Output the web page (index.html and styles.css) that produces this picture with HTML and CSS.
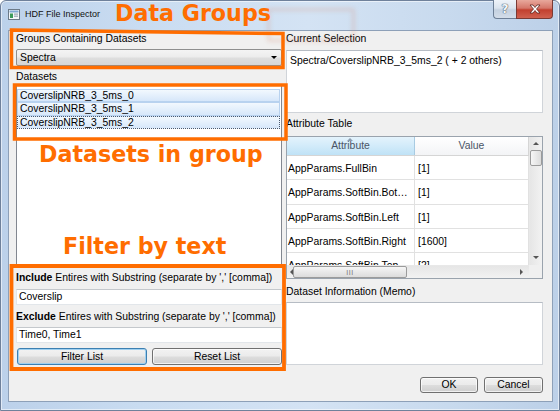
FILE: index.html
```html
<!DOCTYPE html>
<html>
<head>
<meta charset="utf-8">
<title>HDF File Inspector</title>
<link rel="stylesheet" href="styles.css">
</head>
<body>
<div class="window">
  <div class="titlebar">
    <div class="ghost"></div>
    <svg class="appicon" width="12" height="11" viewBox="0 0 12 11">
      <rect x="0.5" y="0.5" width="11" height="10" fill="#f4f6f8" stroke="#6c7a88"/>
      <rect x="1.5" y="1.5" width="9" height="2" fill="#7fa7d2"/>
      <rect x="2" y="4.5" width="3" height="4.5" fill="#3d9a5a"/>
      <rect x="6" y="4.5" width="4" height="1.2" fill="#9aa6b2"/>
      <rect x="6" y="6.6" width="4" height="1.2" fill="#9aa6b2"/>
    </svg>
    <span class="title">HDF File Inspector</span>
    <div class="caption">
      <div class="cbtn help"><span>?</span></div>
      <div class="cbtn close">
        <svg width="14" height="10" viewBox="0 0 14 10">
          <path d="M2 1 L5 1 L7 3.5 L9 1 L12 1 L8.5 5 L12 9 L9 9 L7 6.5 L5 9 L2 9 L5.5 5 Z" fill="#fff" stroke="#5a2622" stroke-width="0.8" stroke-linejoin="round"/>
        </svg>
      </div>
    </div>
  </div>

  <div class="client">
    <div class="leftcol">
      <div class="lbl">Groups Containing Datasets</div>
      <div class="combo"><span>Spectra</span><span class="drop"></span></div>
      <div class="lbl gap5">Datasets</div>
      <div class="listbox">
        <div class="item">CoverslipNRB_3_5ms_0</div>
        <div class="item">CoverslipNRB_3_5ms_1</div>
        <div class="item focus">CoverslipNRB_3_5ms_2</div>
      </div>
      <div class="lbl gap6"><b>Include</b> Entires with Substring (separate by ',' [comma])</div>
      <div class="textbox gap5">Coverslip</div>
      <div class="lbl gap6"><b>Exclude</b> Entires with Substring (separate by ',' [comma])</div>
      <div class="textbox gap4">Time0, Time1</div>
      <div class="btnrow">
        <div class="btn default">Filter List</div>
        <div class="btn">Reset List</div>
      </div>
    </div>

    <div class="rightcol">
      <div class="lbl">Current Selection</div>
      <div class="textarea sel">Spectra/CoverslipNRB_3_5ms_2 ( + 2 others)</div>
      <div class="lbl gap5">Attribute Table</div>
      <div class="table">
        <div class="tview">
          <div class="thead">
            <div class="th c1 sorted"><span class="sortarrow"></span>Attribute</div>
            <div class="th c2">Value</div>
          </div>
          <div class="tbody">
            <div class="tr"><div class="td c1">AppParams.FullBin</div><div class="td c2">[1]</div></div>
            <div class="tr"><div class="td c1">AppParams.SoftBin.Bot…</div><div class="td c2">[1]</div></div>
            <div class="tr"><div class="td c1">AppParams.SoftBin.Left</div><div class="td c2">[1]</div></div>
            <div class="tr"><div class="td c1">AppParams.SoftBin.Right</div><div class="td c2">[1600]</div></div>
            <div class="tr"><div class="td c1">AppParams.SoftBin.Top</div><div class="td c2">[2]</div></div>
          </div>
        </div>
        <div class="vscroll">
          <span class="arr up"></span>
          <div class="vthumb"></div>
          <span class="arr down"></span>
        </div>
        <div class="hscroll">
          <span class="arr left"></span>
          <div class="hthumb"><span class="grip">III</span></div>
          <span class="arr right"></span>
        </div>
        <div class="corner"></div>
      </div>
      <div class="lbl gap7">Dataset Information (Memo)</div>
      <div class="textarea memo"></div>
      <div class="dlgbtns">
        <div class="btn ok">OK</div>
        <div class="btn cancel">Cancel</div>
      </div>
    </div>
  </div>

  <svg class="marks" width="560" height="411" viewBox="0 0 560 411">
    <polygon points="11.5,30 283,33.5 283,67.5 11.5,67.5" fill="none" stroke="#ff6d00" stroke-width="3.5"/>
    <polygon points="14.5,85 286,85 286,139 14.5,139" fill="none" stroke="#ff6d00" stroke-width="3.5"/>
    <polygon points="11.5,266 284,266 284,369 11.5,369" fill="none" stroke="#ff6d00" stroke-width="3.8"/>
  </svg>
  <div class="anno a1">Data Groups</div>
  <div class="anno a2">Datasets in group</div>
  <div class="anno a3">Filter by text</div>
</div>
</body>
</html>
```

FILE: styles.css
```css
* { box-sizing: border-box; margin: 0; padding: 0; }
html, body { width: 560px; height: 411px; overflow: hidden; background: #fff; }
body { font-family: "Liberation Sans", Arial, sans-serif; font-size: 10.4px; color: #000; }

.window {
  position: relative;
  width: 560px;
  height: 411px;
  display: flex;
  flex-direction: column;
  border: 1px solid #6f819b;
  border-radius: 6px 6px 0 0;
  background: linear-gradient(90deg, #bcd1ea 0%, #c9dcf1 25%, #d4e3f4 55%, #c8daee 80%, #bcd0e8 100%);
  box-shadow: inset 0 0 0 1px rgba(255,255,255,0.55);
}

/* title bar */
.titlebar {
  position: relative;
  height: 29px;
  flex: none;
  display: flex;
  align-items: flex-start;
  padding: 0 6px 0 7px;
}
.ghost {
  position: absolute;
  left: 266px;
  top: 7px;
  width: 88px;
  height: 34px;
  border: 3px solid rgba(214, 150, 125, 0.3);
  border-radius: 3px;
  filter: blur(2px);
}
.appicon { margin-top: 8px; flex: none; }
.title {
  position: relative;
  margin-left: 5px;
  margin-top: 7px;
  font-size: 9px;
  line-height: 12px;
  color: #111;
}
.caption { margin-left: auto; margin-top: -1px; display: flex; }
.cbtn {
  height: 19px;
  display: flex;
  align-items: center;
  justify-content: center;
  border: 1px solid #6d7f96;
  border-top: none;
}
.help {
  width: 23px;
  border-right: none;
  border-radius: 0 0 0 4px;
  background: linear-gradient(#eef3f9 0%, #dbe4ee 45%, #c4d1e0 55%, #d3dde9 100%);
}
.help span {
  font: bold 12px "DejaVu Sans", sans-serif;
  color: #f4f7fa;
  text-shadow: 0 0 1px #55606e, 0 0 1px #55606e, 0 0 1px #55606e;
  line-height: 12px;
}
.close {
  width: 37px;
  border-radius: 0 0 4px 0;
  border-color: #7a3a34;
  background: linear-gradient(#e8a89c 0%, #d5776a 45%, #c2402f 55%, #d0614f 100%);
}

/* client area */
.client {
  flex: 1;
  margin: 0 6px 8px 7px;
  border: 1px solid #8da0b8;
  background: #f0f0f0;
  display: flex;
  gap: 4px;
  padding: 2px 8px 0 7px;
}
.leftcol { width: 266px; display: flex; flex-direction: column; }
.rightcol { width: 257px; display: flex; flex-direction: column; }

.lbl { height: 12px; line-height: 12px; white-space: nowrap; }
.lbl b { font-weight: bold; }
.gap4 { margin-top: 4px; }
.gap5 { margin-top: 5px; }
.gap6 { margin-top: 6px; }
.gap7 { margin-top: 7px; }

.combo {
  margin-top: 4px;
  height: 17px;
  border: 1px solid #8e8f8f;
  border-radius: 2px;
  background: linear-gradient(#f4f4f4 0%, #ececec 48%, #dedede 52%, #d6d6d6 100%);
  display: flex;
  align-items: center;
  padding: 0 4px 0 3px;
}
.combo span:first-child { flex: 1; }
.drop {
  width: 0; height: 0;
  border-left: 3px solid transparent;
  border-right: 3px solid transparent;
  border-top: 3px solid #000;
}

.listbox {
  margin-top: 1px;
  height: 182px;
  background: #fff;
  border: 1px solid #828790;
  padding: 4px 1px 0 0;
}
.item {
  height: 13.3px;
  line-height: 11px;
  padding-left: 2px;
  border: 1px solid #b8d2ef;
  background: linear-gradient(#f2f8fe, #d6e7fa);
  white-space: nowrap;
}
.item.focus { border: 1px dotted #4a5a70; }

.textbox {
  height: 16px;
  line-height: 14px;
  background: #fff;
  border: 1px solid #e2e6ea;
  border-top-color: #c4c8cc;
  padding-left: 2px;
}
.btnrow {
  margin-top: 5px;
  display: flex;
  gap: 5px;
  padding-left: 1px;
}
.btn {
  height: 17px;
  line-height: 15px;
  text-align: center;
  border: 1px solid #707070;
  border-radius: 3px;
  background: linear-gradient(#f2f2f2 0%, #ebebeb 48%, #dddddd 52%, #cfcfcf 100%);
  box-shadow: inset 0 0 0 1px rgba(255,255,255,0.7);
}
.btnrow .btn { width: 130px; }
.btn.default { border-color: #3c7fb1; box-shadow: inset 0 0 0 1px #9fd0f0; }

.textarea {
  background: #fff;
  border: 1px solid #d0d4d9;
  border-top-color: #b6bcc4;
}
.sel { margin-top: 5px; height: 63px; padding: 4px 3px; line-height: 12px; }
.memo { margin-top: 4px; height: 63px; }

.table {
  margin-top: 6px;
  height: 143px;
  border: 1px solid #9aa3ad;
  background: #fff;
  display: grid;
  grid-template-columns: 1fr 13px;
  grid-template-rows: 1fr 13px;
}
.tview { overflow: hidden; }
.thead { display: flex; height: 19px; border-bottom: 1px solid #d5d5d5; }
.th {
  position: relative;
  line-height: 18px;
  text-align: center;
  color: #4a5566;
  border-right: 1px solid #d5d5d5;
  background: linear-gradient(#ffffff, #f3f4f6);
}
.th.sorted {
  background: linear-gradient(#e4f3fc 0%, #d2ebfa 50%, #bfe2f6 100%);
  border-right-color: #a8cbe2;
}
.c1 { width: 128px; flex: none; }
.c2 { width: 114px; flex: none; }
.sortarrow {
  position: absolute;
  left: 60px;
  top: 1px;
  width: 0; height: 0;
  border-left: 3.5px solid transparent;
  border-right: 3.5px solid transparent;
  border-bottom: 3px solid #8c9cae;
}
.tr { display: flex; height: 24.3px; border-bottom: 1px solid #e1e1e1; }
.td {
  line-height: 24px;
  padding: 1px 0 0 1px;
  border-right: 1px solid #e1e1e1;
  white-space: nowrap;
  overflow: hidden;
}
.td.c2 { padding-left: 3px; }

.vscroll {
  background: linear-gradient(90deg, #e6e6e6, #f2f2f2);
  border-left: 1px solid #e8e8e8;
  position: relative;
}
.hscroll {
  background: linear-gradient(#e6e6e6, #f2f2f2);
  border-top: 1px solid #e8e8e8;
  position: relative;
}
.corner { background: #f0f0f0; }
.arr { position: absolute; width: 0; height: 0; }
.arr.up { left: 3px; top: 5px; border-left: 3px solid transparent; border-right: 3px solid transparent; border-bottom: 3px solid #555; }
.arr.down { left: 3px; bottom: 6px; border-left: 3px solid transparent; border-right: 3px solid transparent; border-top: 3px solid #555; }
.arr.left { left: 3px; top: 3px; border-top: 3px solid transparent; border-bottom: 3px solid transparent; border-right: 3px solid #555; }
.arr.right { right: 6px; top: 3px; border-top: 3px solid transparent; border-bottom: 3px solid transparent; border-left: 3px solid #555; }
.vthumb {
  position: absolute;
  left: 0; right: 0;
  top: 13px;
  height: 16px;
  border: 1px solid #9b9b9b;
  border-radius: 2px;
  background: linear-gradient(90deg, #f6f6f6, #dcdcdc);
}
.hthumb {
  position: absolute;
  left: 6px;
  width: 114px;
  top: 0; bottom: 0;
  border: 1px solid #9b9b9b;
  border-radius: 2px;
  background: linear-gradient(#f6f6f6, #dcdcdc);
  display: flex;
  align-items: center;
  justify-content: center;
}
.grip { font-size: 7px; line-height: 7px; color: #777; letter-spacing: 0.5px; }

.dlgbtns {
  margin-top: 12px;
  display: flex;
  justify-content: flex-end;
  gap: 6px;
}
.dlgbtns .btn { height: 16px; line-height: 14px; }
.ok { width: 58px; }
.cancel { width: 59px; }

/* annotations */
.marks { position: absolute; left: -1px; top: -1px; pointer-events: none; }
.anno {
  position: absolute;
  font-family: "DejaVu Sans", sans-serif;
  font-weight: bold;
  font-size: 22.2px;
  line-height: 22px;
  color: #ff6d00;
  white-space: nowrap;
}
.a1 { left: 114px; top: 1px; }
.a2 { left: 38px; top: 142px; }
.a3 { left: 62px; top: 234px; }
```
